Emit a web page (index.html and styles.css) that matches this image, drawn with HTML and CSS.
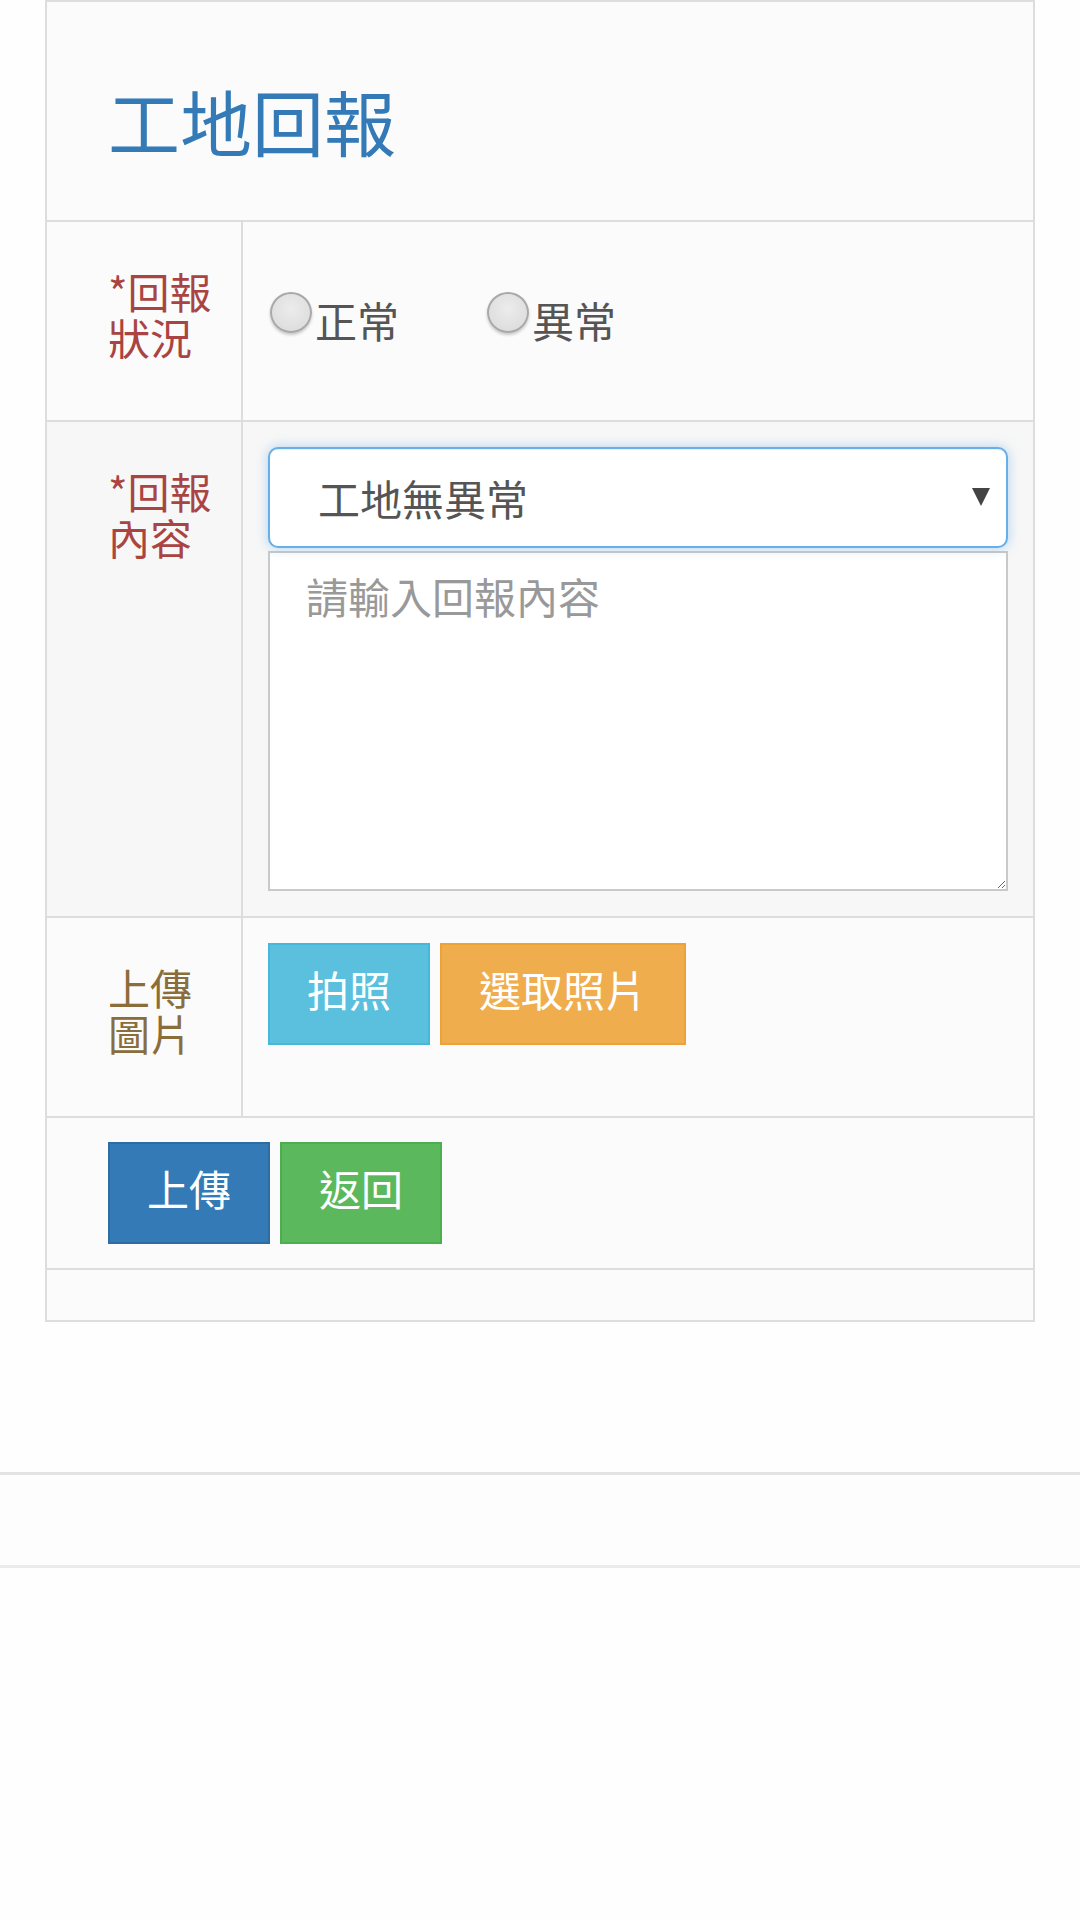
FILE: index.html
```html
<!DOCTYPE html>
<html lang="zh-Hant">
<head>
    <meta charset="UTF-8">
    <meta name="viewport" content="width=device-width, initial-scale=1.0">
    <title>工地回報</title>
    <link rel="stylesheet" href="styles.css">
</head>
<body>
    <div class="panel">
        <div class="panel-head">
            <h1 class="title">工地回報</h1>
        </div>

        <div class="form-row">
            <div class="form-label required">*回報狀況</div>
            <div class="form-field radios">
                <label class="radio"><input type="radio" name="status"><span>正常</span></label>
                <label class="radio"><input type="radio" name="status"><span>異常</span></label>
            </div>
        </div>

        <div class="form-row striped">
            <div class="form-label required">*回報內容</div>
            <div class="form-field">
                <div class="select-wrap">
                    <select class="select">
                        <option>工地無異常</option>
                    </select>
                </div>
                <textarea class="textarea" placeholder="請輸入回報內容"></textarea>
            </div>
        </div>

        <div class="form-row">
            <div class="form-label optional">上傳圖片</div>
            <div class="form-field buttons">
                <button type="button" class="btn btn-info">拍照</button>
                <button type="button" class="btn btn-warning">選取照片</button>
            </div>
        </div>

        <div class="form-actions buttons">
            <button type="submit" class="btn btn-primary">上傳</button>
            <button type="button" class="btn btn-success">返回</button>
        </div>

        <div class="panel-foot"></div>
    </div>

    <div class="page-footer"></div>
</body>
</html>
```

FILE: styles.css
```css
* {
    margin: 0;
    padding: 0;
    box-sizing: border-box;
}

body {
    font-family: "Noto Sans CJK TC", "Noto Sans CJK SC", sans-serif;
    background: #fefefe;
    color: #555;
}

.panel {
    margin: 0 45px;
    background: #fbfbfb;
    border: 2px solid #dddddd;
}

.panel-head {
    height: 220px;
    padding: 78px 61px 0;
    border-bottom: 2px solid #dddddd;
}

.title {
    font-size: 72px;
    font-weight: 400;
    line-height: 80px;
    color: #337ab7;
}

.form-row {
    display: grid;
    grid-template-columns: 196px 1fr;
    border-bottom: 2px solid #dddddd;
}

.form-row.striped {
    background: #f7f7f7;
}

.form-label {
    padding: 46px 16px 60px 61px;
    font-size: 42px;
    line-height: 46px;
    border-right: 2px solid #dddddd;
}

.form-label.required {
    color: #a94442;
}

.form-label.optional {
    color: #8a6d3b;
}

.form-field {
    padding: 25px;
}

/* radios */
.radios {
    display: flex;
    align-items: flex-start;
    gap: 86px;
    padding-top: 70px;
}

.radio {
    display: flex;
    align-items: flex-start;
    gap: 3px;
    font-size: 42px;
    line-height: 46px;
    color: #555;
}

.radio span {
    padding-top: 5px;
}

.radio input {
    appearance: none;
    -webkit-appearance: none;
    width: 42px;
    height: 41px;
    margin-left: 2px;
    border-radius: 50%;
    border: 2px solid #a9a9a9;
    background: radial-gradient(circle at 50% 40%, #ececec 0%, #d9d9d9 100%);
    box-shadow: 0 2px 3px rgba(0, 0, 0, 0.2);
}

/* select + textarea */
.select-wrap {
    position: relative;
    margin-bottom: 3px;
}

.select-wrap::after {
    content: "";
    position: absolute;
    right: 18px;
    top: 41px;
    border-left: 9px solid transparent;
    border-right: 9px solid transparent;
    border-top: 18px solid #444;
    pointer-events: none;
}

.select {
    appearance: none;
    -webkit-appearance: none;
    display: block;
    width: 100%;
    height: 101px;
    padding: 0 48px;
    font-family: inherit;
    font-size: 42px;
    color: #555;
    background: #fff;
    border: 2px solid #66afe9;
    border-radius: 10px;
    outline: none;
    box-shadow: inset 0 1px 1px rgba(0, 0, 0, 0.075), 0 0 12px rgba(102, 175, 233, 0.5);
}

.textarea {
    display: block;
    width: 100%;
    height: 340px;
    padding: 18px 36px;
    font-family: inherit;
    font-size: 42px;
    line-height: 1.2;
    color: #555;
    background: #fff;
    border: 2px solid #c9c9c9;
    outline: none;
}

.textarea::placeholder {
    color: #999;
}

/* buttons */
.buttons {
    display: flex;
    align-items: flex-start;
    gap: 10px;
}

.form-actions {
    padding: 24px 61px;
    border-bottom: 2px solid #dddddd;
}

.btn {
    font-family: inherit;
    font-size: 42px;
    line-height: 58px;
    padding: 15px 37px 25px;
    color: #fff;
    border: 2px solid transparent;
    border-radius: 0;
    cursor: pointer;
}

.btn-info {
    background: #5bc0de;
    border-color: #46b8da;
}

.btn-warning {
    background: #f0ad4e;
    border-color: #eea236;
}

.btn-primary {
    background: #337ab7;
    border-color: #2e6da4;
}

.btn-success {
    background: #5cb85c;
    border-color: #4cae4c;
}

.panel-foot {
    height: 50px;
}

.page-footer {
    margin-top: 150px;
    height: 96px;
    background: #fdfdfd;
    border-top: 3px solid #e3e3e3;
    border-bottom: 3px solid #ebebeb;
}
```
